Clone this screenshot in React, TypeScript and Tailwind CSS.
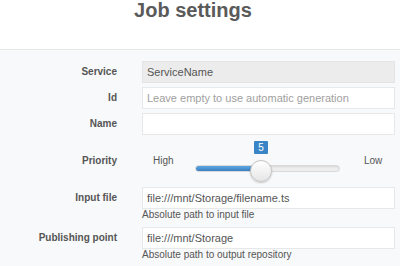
import React from "react";

function Row({ label, children }: { label: string; children: React.ReactNode }) {
  return (
    <div className="flex">
      <div className="w-[117px] shrink-0 h-[22px] flex items-center justify-end text-[10px] font-bold text-[#555] leading-[12px]">
        {label}
      </div>
      <div className="ml-[25px] flex-1">{children}</div>
    </div>
  );
}

function Input({ value, placeholder, disabled }: { value?: string; placeholder?: string; disabled?: boolean }) {
  return (
    <div
      className={`h-[22px] border px-[4px] flex items-center text-[11px] leading-[13px] ${
        disabled ? "bg-[#ececec] border-[#e4e4e4] text-[#555]" : "bg-white border-[#e6e8ea] text-[#555]"
      }`}
    >
      {value ? <span>{value}</span> : <span className="text-[#a0a0a0]">{placeholder}</span>}
    </div>
  );
}

export default function App() {
  return (
    <div className="w-[400px] h-[266px] overflow-hidden bg-[#f8f9fa]" style={{ fontFamily: '"Liberation Sans", Arial, sans-serif' }}>
      <div className="h-[50px] bg-white border-b border-[#e6e8e6] flex justify-center pr-[14px]">
        <h1 className="text-[20px] leading-[20px] font-bold text-[#5a5a5a]">Job settings</h1>
      </div>
      <div className="pt-[11px] pr-[5px] flex flex-col">
        <Row label="Service">
          <Input value="ServiceName" disabled />
        </Row>
        <div className="mt-[4px]">
          <Row label="Id">
            <Input placeholder="Leave empty to use automatic generation" />
          </Row>
        </div>
        <div className="mt-[4px]">
          <Row label="Name">
            <Input />
          </Row>
        </div>
        <div className="mt-[4px] flex h-[44px]">
          <div className="w-[117px] shrink-0 pt-[16px] text-right text-[10px] font-bold text-[#555] leading-[12px]">Priority</div>
          <div className="ml-[25px] flex-1 flex">
            <div className="w-[53px] pl-[11px] pt-[16px] text-[10px] leading-[12px] text-[#555]">High</div>
            <div className="w-[145px] relative h-[44px]">
              <div className="absolute left-[59px] top-[2px] w-[14px] h-[13px] bg-[#3a85c6] text-white text-[10px] leading-[13px] text-center rounded-[1px]">
                5
              </div>
              <div className="absolute left-0 right-0 top-[26px] h-[7px] rounded-full bg-[#eeeeee] border border-[#d9d9d9] shadow-[inset_0_1px_2px_rgba(0,0,0,0.1)] overflow-hidden">
                <div className="h-full w-[66px] bg-gradient-to-b from-[#5ea6e0] to-[#3a80c2]" />
              </div>
              <div className="absolute left-[55px] top-[21px] w-[22px] h-[22px] rounded-full bg-gradient-to-b from-white to-[#e6e6e6] border border-[#c4c4c4] shadow-[0_1px_2px_rgba(0,0,0,0.2)]" />
            </div>
            <div className="pl-[24px] pt-[16px] text-[10px] leading-[12px] text-[#555]">Low</div>
          </div>
        </div>
        <div className="mt-[4px]">
          <Row label="Input file">
            <Input value="file:///mnt/Storage/filename.ts" />
            <div className="text-[10px] leading-[12px] text-[#555]">Absolute path to input file</div>
          </Row>
        </div>
        <div className="mt-[6px]">
          <Row label="Publishing point">
            <Input value="file:///mnt/Storage" />
            <div className="text-[10px] leading-[12px] text-[#555]">Absolute path to output repository</div>
          </Row>
        </div>
      </div>
    </div>
  );
}
